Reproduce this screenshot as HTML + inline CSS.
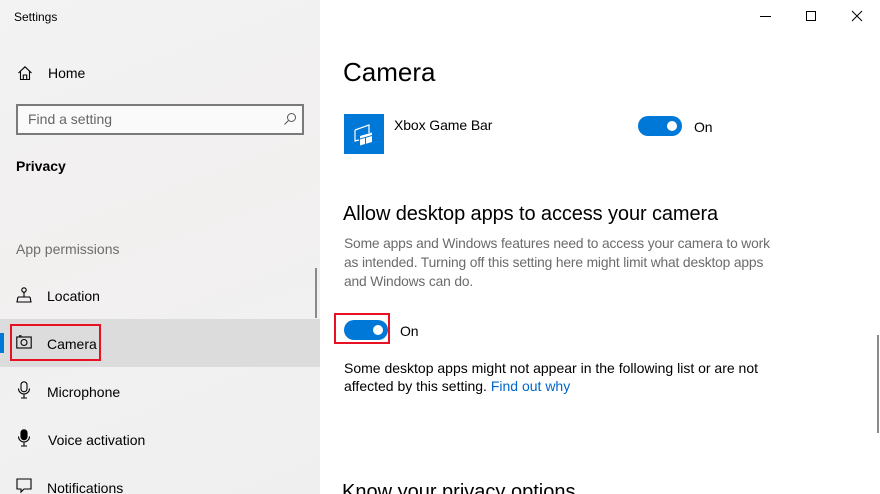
<!DOCTYPE html>
<html><head><meta charset="utf-8"><style>
*{margin:0;padding:0;box-sizing:border-box}
html,body{width:880px;height:494px;overflow:hidden}
body{position:relative;font-family:"Liberation Sans",sans-serif;color:#000;background:#fff}
.side{position:absolute;left:0;top:0;width:320px;height:494px;background:linear-gradient(160deg,#f3f3f3 0%,#f2efef 45%,#f1f1f1 70%,#efefef 100%)}
.a{position:absolute;white-space:nowrap}
.t{font-size:14px;letter-spacing:-0.1px}
.p{font-size:13.8px;color:#6b6b6b;letter-spacing:-0.15px}
.tog{position:absolute;width:44px;height:20px;border-radius:10px;background:#0078d7}
.tog::after{content:"";position:absolute;right:5px;top:5px;width:10px;height:10px;border-radius:50%;background:#fff}
svg{position:absolute}
</style></head><body>
<div class="side"></div>
<div class="a" style="left:14px;top:10px;font-size:12px">Settings</div>
<svg style="left:17px;top:65px" width="16" height="16" viewBox="0 0 16 16" fill="none" stroke="#000" stroke-width="1.1"><path d="M1.5 8 8 1.8 14.5 8M3.5 6.3V14.5h9V6.3M6.3 14.5V10h3.4v4.5"/></svg>
<div class="a" style="left:48px;top:65px;font-size:14px">Home</div>
<div class="a" style="left:16px;top:104px;width:288px;height:31px;border:2px solid #7a7a7a;background:#fafafa"></div>
<div class="a" style="left:28px;top:111px;font-size:14px;color:#666">Find a setting</div>
<svg style="left:283px;top:112px" width="14" height="14" viewBox="0 0 14 14" fill="none" stroke="#555" stroke-width="1"><circle cx="8.5" cy="5.5" r="4"/><path d="M5.6 8.4 1.5 12.5"/></svg>
<div class="a" style="left:16px;top:158px;font-size:14px;font-weight:bold">Privacy</div>
<div class="a" style="left:16px;top:241px;font-size:14px;color:#6d6d6d">App permissions</div>
<div class="a" style="left:315px;top:268px;width:2px;height:50px;background:#8a8a8a"></div>
<svg style="left:16px;top:287px" width="16" height="18" viewBox="0 0 16 18" fill="none" stroke="#000" stroke-width="1.1"><circle cx="8" cy="3" r="2.2"/><path d="M8 5.2V10M2 10h12M2 10 1 15h14l-1-5"/></svg>
<div class="a" style="left:47px;top:288px;font-size:14px">Location</div>
<div class="a" style="left:0;top:319px;width:320px;height:48px;background:#dcdcdc"></div>
<div class="a" style="left:0;top:333px;width:4px;height:20px;background:#0078d7"></div>
<div class="a" style="left:10px;top:324px;width:91px;height:37px;border:2px solid #e81123"></div>
<svg style="left:16px;top:335px" width="16" height="14" viewBox="0 0 16 14" fill="none" stroke="#000" stroke-width="1.1"><rect x="0.8" y="2" width="14.4" height="11"/><circle cx="8" cy="7.5" r="3"/><path d="M3 0.8h2.5"/></svg>
<div class="a" style="left:47px;top:336px;font-size:14px">Camera</div>
<svg style="left:17px;top:381px" width="14" height="18" viewBox="0 0 14 18" fill="none" stroke="#000" stroke-width="1.1"><rect x="4" y="0.8" width="6" height="10" rx="3"/><path d="M1.5 7.5a5.5 5.5 0 0 0 11 0M7 13.5V17M4 17h6"/></svg>
<div class="a" style="left:47px;top:384px;font-size:14px">Microphone</div>
<svg style="left:17px;top:429px" width="14" height="18" viewBox="0 0 14 18" stroke="#000" stroke-width="1.1" fill="none"><rect x="4" y="0.8" width="6" height="10" rx="3" fill="#000"/><path d="M1.5 7.5a5.5 5.5 0 0 0 11 0M7 13.5V17M4 17h6"/></svg>
<div class="a" style="left:48px;top:432px;font-size:14px">Voice activation</div>
<svg style="left:16px;top:478px" width="16" height="16" viewBox="0 0 16 16" fill="none" stroke="#000" stroke-width="1.1"><path d="M1 1h14v10H8l-3 3v-3H1z"/></svg>
<div class="a" style="left:47px;top:480px;font-size:14px">Notifications</div>

<div class="a" style="left:760px;top:16px;width:11px;height:1px;background:#000"></div>
<div class="a" style="left:806px;top:11px;width:10px;height:10px;border:1px solid #000"></div>
<svg style="left:851px;top:10px" width="12" height="12" viewBox="0 0 12 12" stroke="#000" stroke-width="1"><path d="M1 1l10 10M11 1 1 11"/></svg>

<div class="a" style="left:343px;top:57px;font-size:26px;font-weight:300">Camera</div>
<div class="a" style="left:344px;top:114px;width:40px;height:40px;background:#0078d7"></div>
<svg style="left:344px;top:114px" width="40" height="40" viewBox="0 0 40 40" fill="none" stroke="#fff" stroke-width="1.2"><path d="M11 16 25 11v8M11 16v11l4-1"/><path d="M16 22l12-3.5V21l-12 3.5z" fill="#fff" stroke="none"/><path d="M16 25.5l5-1.5v6l-5 1.5zM22 23.8l6-1.8v6l-6 1.8z" fill="#fff" stroke="none"/></svg>
<div class="a t" style="left:394px;top:117px">Xbox Game Bar</div>
<div class="tog" style="left:638px;top:116px"></div>
<div class="a t" style="left:694px;top:119px">On</div>

<div class="a" style="left:343px;top:203px;font-size:20px;letter-spacing:-0.1px">Allow desktop apps to access your camera</div>
<div class="a p" style="left:344px;top:236px">Some apps and Windows features need to access your camera to work</div>
<div class="a p" style="left:344px;top:255px">as intended. Turning off this setting here might limit what desktop apps</div>
<div class="a p" style="left:344px;top:274px">and Windows can do.</div>
<div class="a" style="left:334px;top:313px;width:56px;height:31px;border:2px solid #e81123"></div>
<div class="tog" style="left:344px;top:320px"></div>
<div class="a t" style="left:400px;top:323px">On</div>
<div class="a t" style="left:344px;top:360px;letter-spacing:0">Some desktop apps might not appear in the following list or are not</div>
<div class="a t" style="left:344px;top:378px;letter-spacing:0">affected by this setting. <span style="color:#0066cc">Find out why</span></div>
<div class="a" style="left:877px;top:335px;width:2px;height:98px;background:#8a8a8a"></div>
<div class="a" style="left:342px;top:481px;font-size:20px">Know your privacy options</div>
</body></html>
